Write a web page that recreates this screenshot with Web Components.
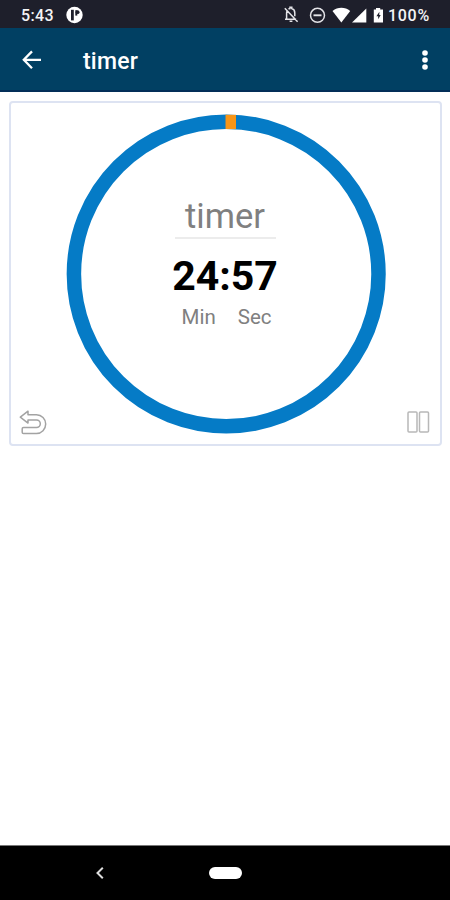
<!DOCTYPE html>
<html lang="en"><head><meta charset="utf-8"><title>timer</title>
<style>html,body{margin:0;height:100%;background:#fff}body{font-family:Roboto,sans-serif;overflow:hidden}</style></head>
<body><timer-app></timer-app>
<script>
function element(name, markup) {
  customElements.define(name, class extends HTMLElement {
    constructor() {
      super();
      this.attachShadow({ mode: 'open' }).innerHTML = markup;
    }
  });
}

element('status-bar', `
<style>
:host{display:flex;box-sizing:border-box;height:28px;padding:2px 19px 0 21px;background:#1e1f2b;color:#f4f4f6;align-items:center;font:500 16px/26px Roboto,sans-serif}
svg{display:block;flex:none}.time{width:45px;letter-spacing:.4px;padding-top:1px}.grow{flex:1}
.level{width:43px;white-space:nowrap;letter-spacing:.7px;padding-top:1px}
</style>
<span class="time">5:43</span>
<svg width="17" height="18" viewBox="0 0 17 18"><circle cx="8.500" cy="9" r="8.200" fill="#fff"/><path d="M6.400 3.800v10.600" stroke="#1e1f2b" stroke-width="2.800" fill="none"/><path d="M10.300 4.200v5.400" stroke="#1e1f2b" stroke-width="2" fill="none"/><circle cx="11.600" cy="6.200" r="1.900" fill="#1e1f2b"/></svg>
<span class="grow"></span>
<svg width="104" height="22" viewBox="284 3 104 22">
<g fill="none" stroke="#e4e4e8" stroke-width="1.500"><path d="M284.800 7.300l12.800 13.500M285 18.200h11.200M286.600 18v-6c0-1 .3-1.800.8-2.500M288.500 8.100c.5-.3.9-.4 1.500-.5V6.200h1.800v1.400c2 .5 3 2.200 3 4.400v3.200M289.600 20.300h2.800"/><circle cx="317.500" cy="14.300" r="7"/><path d="M313.500 14.300h8" stroke-width="1.900"/></g>
<g fill="#fff"><path d="M332.500 10c5.200-4.200 12.500-4.200 17.700 0l-8.850 11.600z"/><path d="M366.300 7.500v14.100h-14.300z"/><path d="M373.800 8.600h2.200V7h4.200v1.600h2.800v12.900h-9.200z"/></g><path d="M379.400 10.800l-3 4.500h1.800v3l2.500-4.300h-1.500z" fill="#1e1f2b"/>
</svg>
<span class="level">100%</span>`);

element('app-bar', `
<style>
:host{display:flex;box-sizing:border-box;height:64px;background:#014063;border-bottom:2px solid #032e58;color:#fff;padding:0 21px 0 21px;align-items:center}
svg{display:block}h1{font:500 23px/28px Roboto,sans-serif;margin:6px 0 0 40px;flex:1;letter-spacing:.2px}
.dots{margin-top:2px}
</style>
<svg width="22" height="22" viewBox="0 0 22 22" fill="none" stroke="#fff" stroke-width="2.300"><path d="M20 11.800H3M11 3.400L2.800 11.800 11 20.200"/></svg>
<h1><slot></slot></h1>
<svg class="dots" width="8" height="22" viewBox="0 0 8 22" fill="#fff"><circle cx="4" cy="4" r="2.800"/><circle cx="4" cy="11" r="2.800"/><circle cx="4" cy="18" r="2.800"/></svg>`);

element('timer-ring', `
<style>
:host{display:grid;width:320px;height:320px}
svg,.face{grid-area:1/1}svg{display:block}
.face{display:flex;flex-direction:column;align-items:center;padding:81px 1px 0 0;z-index:1}
</style>
<svg width="320" height="320" viewBox="0 0 320 320"><circle cx="160.200" cy="160" r="152.300" fill="none" stroke="#057bc6" stroke-width="14.500"/><path d="M159.500 .8h10.500v14.300h-10.500z" fill="#f79517"/></svg>
<div class="face"><slot></slot></div>`);

element('timer-face', `
<style>
:host{display:flex;flex-direction:column;align-items:center}
.name{font:400 34.500px/42px Roboto,sans-serif;color:#808080;height:44px;box-sizing:border-box;width:101px;text-align:center;border-bottom:2px solid #ececec}
.time{font:700 41px/48px Roboto,sans-serif;color:#000;margin-top:13px}
.units{display:flex;gap:22px;font:400 20.500px/26px Roboto,sans-serif;color:#808080;margin:4px 0 0 3px}
</style>
<div class="name">timer</div><div class="time">24:57</div><div class="units"><span>Min</span><span>Sec</span></div>`);

element('timer-card', `
<style>
:host{display:flex;flex-direction:column;box-sizing:border-box;margin:9px 8px 0 9px;height:345px;border:2px solid #dde3f2;border-radius:4px;padding:11px 9px 0 8px;background:#fff}
.ring{display:flex;justify-content:center;padding-left:1px}
.actions{display:flex;justify-content:space-between;margin-top:-25px}svg{display:block}
</style>
<div class="ring"><slot></slot></div>
<div class="actions">
<svg width="30" height="28" viewBox="0 0 30 28" fill="none" stroke="#a3a3a3" stroke-width="1.500" stroke-linejoin="round"><path d="M1.300 8.200L9 2.200V5.800h8.500c5.100 0 9.200 4.200 9.200 9.300s-4.100 9.400-9.200 9.400H4.500q-1.300 0-1.300-1.300v-3.400q0-1.300 1.300-1.300h13a3.800 3.800 0 0 0 0-7.600H9v3.200z"/></svg>
<svg width="24" height="24" viewBox="0 0 24 24" fill="none" stroke="#b8b8b8" stroke-width="1.500"><rect x="1" y="3" width="9" height="20" rx="1"/><rect x="12.500" y="3" width="9" height="20" rx="1"/></svg>
</div>`);

element('nav-bar', `
<style>
:host{display:flex;box-sizing:border-box;height:55px;background:#000;align-items:center;padding-left:95px;border-top:1px solid #777}
svg{display:block}.home{width:33px;height:12px;border-radius:6px;background:#fff;margin-left:104px}
</style>
<svg width="10" height="14" viewBox="0 0 10 14"><path d="M7.800 1.800L2.500 7l5.300 5.200" fill="none" stroke="#ddd" stroke-width="2"/></svg><div class="home"></div>`);

element('timer-app', `
<style>:host{display:flex;flex-direction:column;width:450px;height:900px;background:#fff}main{flex:1}status-bar,app-bar,nav-bar{flex:none}</style>
<status-bar></status-bar><app-bar>timer</app-bar>
<main><timer-card><timer-ring><timer-face></timer-face></timer-ring></timer-card></main>
<nav-bar></nav-bar>`);
</script></body></html>
